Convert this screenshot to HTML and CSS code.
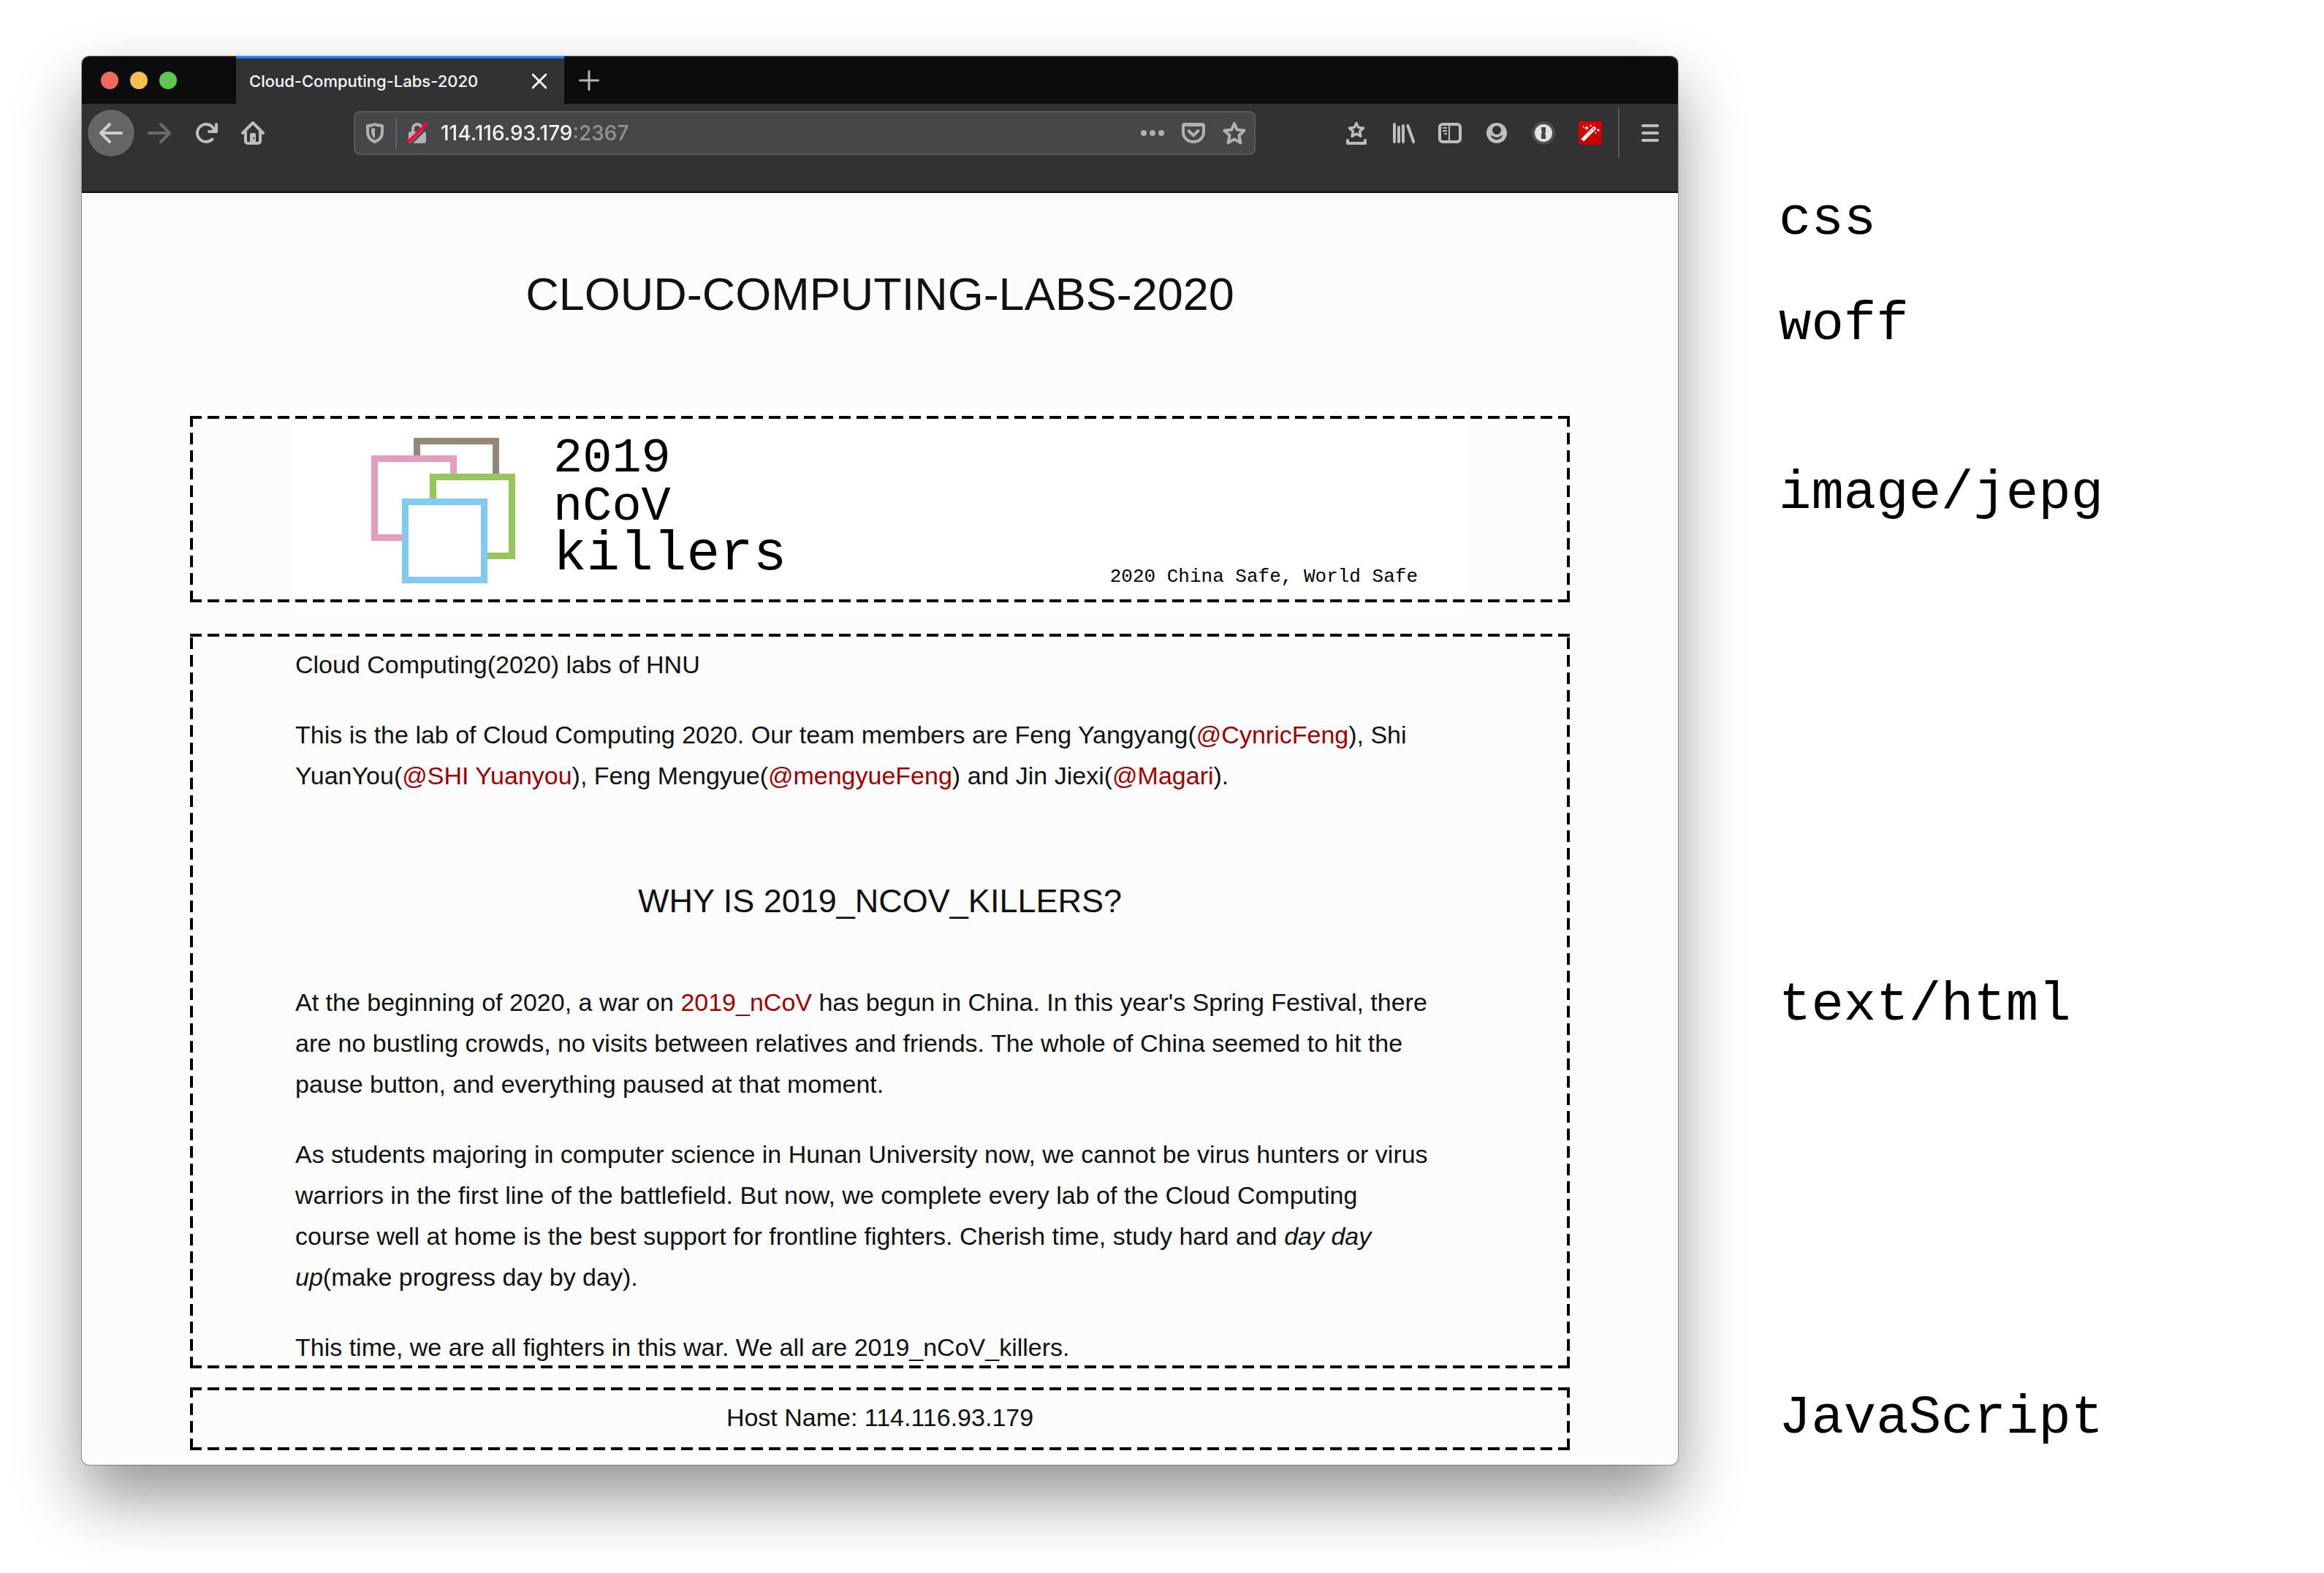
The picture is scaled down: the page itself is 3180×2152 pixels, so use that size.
FILE: index.html
```html
<!DOCTYPE html>
<html lang="en">
<head>
<meta charset="utf-8">
<title>Cloud-Computing-Labs-2020</title>
<link rel="stylesheet" href="styles.css">
</head>
<body>
<main class="window">
  <header class="titlebar">
    <div class="lights">
      <button class="light light-close" aria-label="Close window"></button>
      <button class="light light-min" aria-label="Minimise window"></button>
      <button class="light light-max" aria-label="Zoom window"></button>
    </div>
    <div class="tab">
      <span class="tab-title">Cloud-Computing-Labs-2020</span>
      <button class="plain" aria-label="Close tab"><svg class="icon-small" viewBox="0 0 20 28"><path d="M1 5l18 18M19 5L1 23" stroke="#f9f9fa" stroke-width="3" stroke-linecap="round"/></svg></button>
    </div>
    <button class="plain new-tab" aria-label="New tab"><svg class="icon-plus" viewBox="0 0 28 28"><path d="M14 1.500v25M1.500 14h25" stroke="#b8b8b9" stroke-width="3" stroke-linecap="round"/></svg></button>
  </header>

  <nav class="toolbar">
    <div class="nav-buttons">
      <button class="plain back" aria-label="Back"><svg class="icon" viewBox="0 0 16 16" fill="#cfcfcf"><path d="M15 7H3.414l4.293-4.293a1 1 0 0 0-1.414-1.414l-6 6a1 1 0 0 0 0 1.414l6 6a1 1 0 0 0 1.414-1.414L3.414 9H15a1 1 0 0 0 0-2z"/></svg></button>
      <button class="plain tool" aria-label="Forward"><svg class="icon" viewBox="0 0 16 16" fill="#6c6c6e"><path d="M1 7h11.586L8.293 2.707a1 1 0 0 1 1.414-1.414l6 6a1 1 0 0 1 0 1.414l-6 6a1 1 0 0 1-1.414-1.414L12.586 9H1a1 1 0 0 1 0-2z"/></svg></button>
      <button class="plain tool" aria-label="Reload"><svg class="icon" viewBox="0 0 16 16" fill="#bebebf"><path d="M15 1a1 1 0 0 0-1 1v2.418A6.995 6.995 0 1 0 12.950 12.950a1 1 0 0 0-1.414-1.414A5.019 5.019 0 1 1 12.549 6H10a1 1 0 0 0 0 2h5a1 1 0 0 0 1-1V2a1 1 0 0 0-1-1z"/></svg></button>
      <button class="plain tool" aria-label="Home"><svg class="icon" viewBox="0 0 16 16"><path d="M1 8l7-7 7 7M3 7v6.500a1.500 1.500 0 0 0 1.500 1.500h7a1.500 1.500 0 0 0 1.500-1.500V7" fill="none" stroke="#bebebf" stroke-width="2" stroke-linecap="round" stroke-linejoin="round"/><path d="M6 15V9a1 1 0 0 1 1-1h2a1 1 0 0 1 1 1v6z" fill="#bebebf"/><path d="M8 11h1v1H8z" fill="#323234"/></svg></button>
    </div>

    <form class="urlbar">
      <svg class="icon" viewBox="0 0 16 16"><path d="M8 2c-2 .9-3.500 1-5 1v4c0 4 2 6 5 7 3-1 5-3 5-7V3c-1.500 0-3-.1-5-1z" fill="none" stroke="#b1b1b3" stroke-width="2" stroke-linejoin="round"/><path d="M8 4.500v7.300C6 10.500 5.500 9 5.500 5z" fill="#b1b1b3"/></svg>
      <span class="url-divider"></span>
      <svg class="icon" viewBox="0 0 16 16"><path d="M5 8V5a3 3 0 0 1 6 0v3" fill="none" stroke="#b1b1b3" stroke-width="2"/><path d="M3.500 7h9A1.500 1.500 0 0 1 14 8.500v5a1.500 1.500 0 0 1-1.500 1.500h-9A1.500 1.500 0 0 1 2 13.500v-5A1.500 1.500 0 0 1 3.500 7z" fill="#b1b1b3"/><path d="M3.800 15.200L14 5" stroke="#474749" stroke-width="1.500"/><path d="M2 14L14 2" stroke="#ff0039" stroke-width="2" stroke-linecap="round"/></svg>
      <input class="url-input" type="text" aria-label="Address" value="114.116.93.179:2367">
      <span class="url-actions">
        <svg class="icon" viewBox="0 0 16 16" fill="#b1b1b3"><circle cx="2" cy="8" r="2"/><circle cx="8" cy="8" r="2"/><circle cx="14" cy="8" r="2"/></svg>
        <svg class="icon" viewBox="0 0 16 16"><path d="M2 2h12a1 1 0 0 1 1 1v4.500a7 6.500 0 0 1-14 0V3a1 1 0 0 1 1-1z" fill="none" stroke="#b1b1b3" stroke-width="2"/><path d="M1 1.500h14v2H1z" fill="#b1b1b3"/><path d="M4.800 6.500L8 9.700l3.200-3.200" fill="none" stroke="#b1b1b3" stroke-width="2" stroke-linecap="round" stroke-linejoin="round"/></svg>
        <svg class="icon" viewBox="0 0 16 16"><path d="M8 1.500l1.900 4.300 4.900.5-3.600 3.300 1 5L8 12.200l-4.200 2.400 1-5L1.200 6.300l4.900-.5z" fill="none" stroke="#b1b1b3" stroke-width="2" stroke-linejoin="round"/></svg>
      </span>
    </form>

    <div class="extras">
      <button class="plain" aria-label="Bookmarks"><svg class="icon" viewBox="0 0 16 16" fill="none" stroke="#bebebf" stroke-linecap="round" stroke-linejoin="round"><path d="M8 1.200l1.400 3 3.400.4-2.500 2.200.7 3.400-3-1.700-3 1.700.7-3.400-2.500-2.200 3.400-.4z" stroke-width="1.700"/><path d="M2 13v2h12v-2" stroke-width="2"/></svg></button>
      <button class="plain" aria-label="Library"><svg class="icon" viewBox="0 0 16 16" fill="none" stroke="#bebebf" stroke-width="2" stroke-linecap="round"><path d="M2 2v12M5 4v10M8 3v11M11.200 3l3.900 11"/></svg></button>
      <button class="plain" aria-label="Sidebar"><svg class="icon" viewBox="0 0 16 16" fill="none" stroke="#bebebf"><rect x="1" y="2" width="14" height="12" rx="2" stroke-width="2"/><path d="M7.500 2v12"/><path d="M3 4.500h3M3 6.500h3M4 8.500h2" /></svg></button>
      <button class="plain" aria-label="Account"><svg class="icon" viewBox="0 0 16 16"><circle cx="8" cy="8" r="7" fill="#bebebf"/><circle cx="8" cy="6" r="3" fill="#323234"/><path d="M4 9.500c.5 0 .8.200 1.200.5 1.600 1.300 4 1.300 5.600 0 .4-.3.700-.5 1.200-.5-.4 1.800-2 3-4 3s-3.600-1.200-4-3z" fill="#323234"/></svg></button>
      <button class="plain" aria-label="Password manager"><svg class="icon" viewBox="0 0 16 16"><circle cx="8" cy="8" r="8" fill="#4d4d4e"/><circle cx="8" cy="8" r="6" fill="#e3e3e3"/><path d="M6.500 4h3v4H9v1h.5v3h-3V8H7V7h-.5z" fill="#474747"/></svg></button>
      <button class="plain" aria-label="Magic wand"><svg class="icon" viewBox="0 0 32 32"><rect width="32" height="32" rx="2" fill="#c70000"/><path d="M2 0h28a2 2 0 0 1 2 2v12L0 18V2a2 2 0 0 1 2-2z" fill="#d90000"/><path d="M7 24L20.500 10.500" stroke="#fff" stroke-width="5" stroke-linecap="square"/><path d="M15 15.500l4-4" stroke="#c70000" stroke-width="1"/><path d="M19.500 11.500l2-2" stroke="#fff" stroke-width="4.500" stroke-linecap="round"/><path d="M19.500 11.500l2-2" stroke="#d00000" stroke-width="1.500"/><path d="M11 5.500l1 2.500 2.500 1L12 10l-1 2.500L10 10l-2.500-1L10 8zM16.500 4l.6 1.400 1.400.6-1.400.6-.6 1.400-.6-1.400-1.400-.6 1.400-.6zM6.500 5.500l.5 1.200 1.200.5-1.200.5-.5 1.300L6 7.700l-1.200-.5L6 6.700zM27 9.500l.8 1.700 1.700.8-1.700.8-.8 1.700-.8-1.700-1.700-.8 1.700-.8zM23.500 14l.5 1.200 1.200.5-1.200.5-.5 1.300-.5-1.300-1.200-.5 1.200-.5z" fill="#fff"/></svg></button>
      <span class="tool-divider"></span>
      <button class="plain menu" aria-label="Menu"><svg class="icon" viewBox="0 0 32 32"><path d="M6 6h20M6 16h20M6 26h20" stroke="#bebebf" stroke-width="4" stroke-linecap="round"/></svg></button>
    </div>
  </nav>

  <article class="page">
    <h1 class="title">Cloud-Computing-Labs-2020</h1>

    <section class="frame frame-banner">
      <div class="banner">
        <svg class="logo" viewBox="0 0 199 199" fill="#fff" stroke-width="9">
          <rect x="62.500" y="4.500" width="108" height="108" stroke="#958675"/>
          <rect x="4.500" y="28.500" width="108" height="108" stroke="#e59dbf"/>
          <rect x="84.500" y="53.500" width="108" height="108" stroke="#97c65c"/>
          <rect x="46.500" y="87.500" width="108" height="107" stroke="#82cbf0"/>
        </svg>
        <div class="team"><span>2019</span><span>nCoV</span><span class="team-big">killers</span></div>
        <p class="motto">2020 China Safe, World Safe</p>
      </div>
    </section>

    <section class="frame frame-text">
      <p>Cloud Computing(2020) labs of HNU</p>
      <p>This is the lab of Cloud Computing 2020. Our team members are Feng Yangyang(<a href="#cynric">@CynricFeng</a>), Shi<br>
        YuanYou(<a href="#shi">@SHI Yuanyou</a>), Feng Mengyue(<a href="#mengyue">@mengyueFeng</a>) and Jin Jiexi(<a href="#magari">@Magari</a>).</p>
      <h2 class="subtitle">Why is 2019_nCoV_killers?</h2>
      <p>At the beginning of 2020, a war on <a href="#ncov">2019_nCoV</a> has begun in China. In this year's Spring Festival, there<br>
        are no bustling crowds, no visits between relatives and friends. The whole of China seemed to hit the<br>
        pause button, and everything paused at that moment.</p>
      <p>As students majoring in computer science in Hunan University now, we cannot be virus hunters or virus<br>
        warriors in the first line of the battlefield. But now, we complete every lab of the Cloud Computing<br>
        course well at home is the best support for frontline fighters. Cherish time, study hard and <em>day day<br>
        up</em>(make progress day by day).</p>
      <p>This time, we are all fighters in this war. We all are 2019_nCoV_killers.</p>
    </section>

    <section class="frame frame-host">
      <p>Host Name: 114.116.93.179</p>
    </section>
  </article>
</main>

<aside class="labels">
  <p class="label-css">css</p>
  <p class="label-woff">woff</p>
  <p class="label-image">image/jepg</p>
  <p class="label-html">text/html</p>
  <p class="label-js">JavaScript</p>
</aside>
</body>
</html>
```

FILE: styles.css
```css
* { box-sizing: border-box; }

body {
  margin: 0;
  padding: 77px 0 148px 112px;
  display: grid;
  grid-template-columns: 1fr 884px;
  align-items: start;
  background: #fff;
  color: #111;
  font-family: "Liberation Sans", Arial, sans-serif;
}

p, h1, h2 { margin: 0; font-weight: 400; }

svg { display: block; }

/* Browser window */
.window {
  background: #fcfcfc;
  border-radius: 10px;
  box-shadow: 0 0 0 1px rgba(0, 0, 0, .3), 0 44px 88px rgba(0, 0, 0, .42);
}

.plain {
  display: flex;
  align-items: center;
  justify-content: center;
  padding: 0;
  border: 0;
  background: none;
}

.icon { width: 32px; height: 32px; flex: none; }
.icon-small { width: 20px; height: 28px; }
.icon-plus { width: 28px; height: 28px; }

.titlebar {
  display: flex;
  height: 65px;
  background: #0c0c0d;
  border-radius: 10px 10px 0 0;
  font-family: Inter, sans-serif;
}

.lights {
  display: flex;
  align-items: center;
  gap: 16px;
  width: 211px;
  padding-left: 26px;
}

.light {
  width: 24px;
  height: 24px;
  padding: 0;
  border: 0;
  border-radius: 50%;
}
.light-close { background: #ed6a5e; }
.light-min { background: #f5bf4f; }
.light-max { background: #61c554; }

.tab {
  display: flex;
  align-items: center;
  justify-content: space-between;
  width: 449px;
  padding: 0 24px 0 18px;
  border-top: 3px solid #0a84ff;
  background: #323234;
}

.tab-title {
  color: #f9f9fa;
  font-size: 22px;
  font-weight: 500;
  line-height: 28px;
}

.new-tab { width: 68px; }

.toolbar {
  display: flex;
  align-items: flex-start;
  height: 122px;
  padding: 6px 6px 0 8px;
  background: #323234;
  border-bottom: 2px solid #0c0c0d;
}

.nav-buttons {
  display: flex;
  width: 364px;
  padding-top: 2px;
}

.back {
  width: 64px;
  height: 64px;
  margin-right: 2px;
  border-radius: 50%;
  background: #656566;
  box-shadow: 0 0 0 1px #29292b;
}

.tool { width: 64px; height: 64px; }

.urlbar {
  display: flex;
  flex: 1;
  align-items: center;
  height: 60px;
  margin-top: 4px;
  padding: 0 11px;
  border: 2px solid #58585a;
  border-radius: 8px;
  background: #474749;
}

.url-divider {
  width: 2px;
  height: 42px;
  margin: 0 12px;
  background: #5d6572;
}

/* The host is bright and the port after it is dimmed */
.url-input {
  flex: 1;
  min-width: 0;
  margin-left: 16px;
  padding: 0;
  border: 0;
  background: linear-gradient(90deg, #f9f9fa 179px, #939395 179px);
  -webkit-background-clip: text;
  background-clip: text;
  color: transparent;
  font: 500 28px/36px Inter, sans-serif;
}

.url-actions { display: flex; gap: 24px; }

.extras {
  display: flex;
  align-items: center;
  gap: 32px;
  height: 68px;
  padding-left: 122px;
}

.tool-divider {
  width: 2px;
  height: 68px;
  margin-left: -10px;
  background: #5a5a5c;
}

.menu { width: 64px; margin-left: -22px; }

/* Page in the window */
.page {
  max-width: 1888px;
  margin: 0 auto;
  padding: 98px 0 20px;
  font-size: 34px;
  line-height: 56px;
}

.title {
  margin-bottom: 127px;
  font-size: 63px;
  line-height: 80px;
  text-align: center;
  text-transform: uppercase;
}

.page a { color: #a00000; text-decoration: none; }

/* Dashed outline drawn over the content of each block */
.frame {
  position: relative;
  display: flow-root;
}
.frame::after {
  content: "";
  position: absolute;
  inset: 0;
  pointer-events: none;
  background:
    repeating-linear-gradient(90deg, #000 0 16px, transparent 16px 24px) 0 0 / 100% 4px no-repeat,
    repeating-linear-gradient(90deg, #000 0 16px, transparent 16px 24px) 0 100% / 100% 4px no-repeat,
    repeating-linear-gradient(0deg, #000 0 16px, transparent 16px 24px) 0 0 / 4px 100% no-repeat,
    repeating-linear-gradient(0deg, #000 0 16px, transparent 16px 24px) 100% 0 / 4px 100% no-repeat;
}

.frame-banner { padding: 0 144px; }

.banner {
  display: flex;
  align-items: flex-start;
  height: 280px;
  margin: -11px 0 -14px;
  padding: 41px 64px 0 104px;
  background: #fff;
}

.logo { width: 199px; height: 199px; flex: none; }

.team, .motto, .labels {
  font-family: "Liberation Mono", "Courier New", monospace;
  color: #000;
}

.team {
  display: flex;
  flex-direction: column;
  margin: -5px 0 0 50px;
  font-size: 67px;
  line-height: 66px;
}
.team-big { font-size: 76px; }

.motto {
  margin: 174px 0 0 auto;
  font-size: 26px;
  line-height: 32px;
}

.frame-text {
  display: grid;
  gap: 40px;
  margin-top: 43px;
  padding: 14px 144px 1px;
}

.subtitle {
  margin: 74px 0 40px;
  font-size: 45px;
  line-height: 60px;
  text-align: center;
  text-transform: uppercase;
}

.frame-host {
  margin-top: 26px;
  padding: 13px 0 17px;
  text-align: center;
}

/* Content type beside each part of the page */
.labels {
  padding: 181px 0 0 138px;
  font-size: 74px;
  line-height: 84px;
}
.label-woff { margin-top: 60px; }
.label-image { margin-top: 147px; }
.label-html { margin-top: 616px; }
.label-js { margin-top: 481px; }
```
